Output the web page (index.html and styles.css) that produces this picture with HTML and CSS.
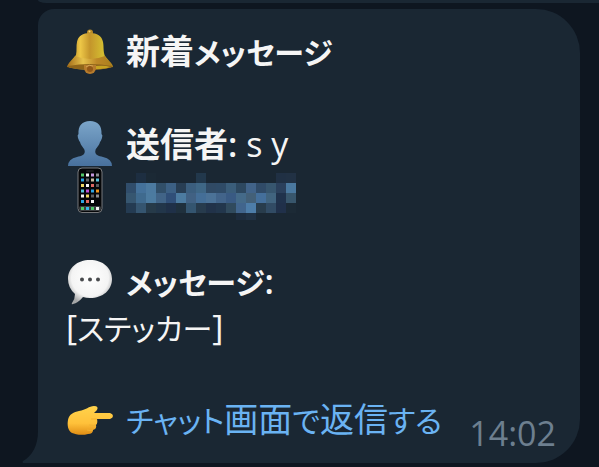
FILE: index.html
```html
<!DOCTYPE html>
<html lang="ja">
<head>
    <meta charset="UTF-8">
    <title>新着メッセージ</title>
    <link rel="stylesheet" href="styles.css">
</head>
<body>
    <div class="chat">
        <div class="bubble-prev"></div>
        <div class="bubble">
            <svg class="tail" viewBox="0 0 16 32"><path d="M16 0C16 15 10 25 1 30Q0 31 1 32H16Z"/></svg>
            <p class="line">
                <svg class="emoji" viewBox="0 0 46 46">
                    <defs>
                        <linearGradient id="gold" x1="0" x2="1">
                            <stop offset="0" stop-color="#a87616"/>
                            <stop offset=".28" stop-color="#edc747"/>
                            <stop offset=".5" stop-color="#c4952b"/>
                            <stop offset=".8" stop-color="#d4bd31"/>
                            <stop offset="1" stop-color="#8d6514"/>
                        </linearGradient>
                        <linearGradient id="rim" x1="0" x2="1">
                            <stop offset="0" stop-color="#a36b18"/>
                            <stop offset=".35" stop-color="#e6c24c"/>
                            <stop offset=".65" stop-color="#bd8727"/>
                            <stop offset="1" stop-color="#a9801c"/>
                        </linearGradient>
                    </defs>
                    <circle cx="23" cy="3.500" r="3" fill="#b98a25"/>
                    <circle cx="22.500" cy="2.500" r="1" fill="#f2d87b"/>
                    <path d="M9 26C10 21 9 17 10 13C11 7 16 4 23 4S35 7 36 13C37 18 36 22 38 27L44 34Q47 39 40 39H6Q-1 39 2 34Z" fill="url(#gold)"/>
                    <path d="M8 27Q23 33 38 27C40 32 46 34 46 38Q23 44 0 38C1 33 7 32 8 27Z" fill="url(#rim)"/>
                    <path d="M1 37Q23 33 45 37Q45 40 23 41Q1 40 1 37Z" fill="#8f651a"/>
                    <path d="M29 37Q38 36 43 38Q38 40 29 40Z" fill="#c6a322"/>
                    <path d="M17 36H29V39A6 6 0 0 1 17 39Z" fill="#b67b2c"/>
                    <circle cx="23" cy="40" r="3" fill="#925818"/>
                    <path d="M19 38Q22 35 26 37" stroke="#d3a453" fill="none"/>
                </svg>
                <b>新着<span class="kana">メッセージ</span></b>
            </p>
            <p class="line blank"></p>
            <p class="line">
                <svg class="emoji" viewBox="0 0 46 46">
                    <defs>
                        <linearGradient id="person" x1="0" y1="0" x2="0" y2="1">
                            <stop offset="0" stop-color="#7ba5c9"/>
                            <stop offset="1" stop-color="#48719e"/>
                        </linearGradient>
                    </defs>
                    <path d="M23 0C31 0 35 5 34.500 13Q36 14 35 17T33 21C32 25 29 27 28.500 29C27 34 32 35 36 36Q45 38 45 45H1Q1 38 10 36C14 35 19 34 17.500 29C17 27 14 25 13 21Q12 20 11 17T11.500 13C11 5 15 0 23 0Z" fill="url(#person)"/>
                </svg>
                <span><b>送信者:</b> s y</span>
            </p>
            <p class="line">
                <svg class="emoji" viewBox="0 0 46 46">
                    <rect x="11" y="1" width="24" height="44.500" rx="4" fill="#050608" stroke="#77797c"/>
                    <rect x="19" y="3" width="8" height="2" rx="1" fill="#191b1d"/>
                    <g class="apps">
                        <path stroke="#51c768" d="M14 8h3"/><path stroke="#f4f4f4" d="M19 8h3"/><path stroke="#c798df" d="M24 8h3"/><path stroke="#8c8d90" d="M29 8h3"/>
                        <path stroke="#2ca5e4" d="M14 13h3"/><path stroke="#626467" d="M19 13h3"/><path stroke="#ccbfa3" d="M24 13h3"/><path stroke="#58c5de" d="M29 13h3"/>
                        <path stroke="#f0d764" d="M14 18.500h3"/><path stroke="#f4f4f4" d="M19 18.500h3"/><path stroke="#dd6762" d="M24 18.500h3"/><path stroke="#58595b" d="M29 18.500h3"/>
                        <path stroke="#56c4da" d="M14 24h3"/><path stroke="#bd52d5" d="M19 24h3"/><path stroke="#2ca5e4" d="M24 24h3"/><path stroke="#ed951d" d="M29 24h3"/>
                        <path stroke="#f4f4f4" d="M14 29h3"/><path stroke="#f0d764" d="M19 29h3"/><path stroke="#5d5f62" d="M24 29h3"/><path stroke="#8c8d90" d="M29 29h3"/>
                        <path stroke="#2ca5e4" d="M14 34.500h3"/><path stroke="#dd6762" d="M19 34.500h3"/><path stroke="#f4f4f4" d="M24 34.500h3"/>
                    </g>
                    <rect x="12" y="39" width="22" height="5" rx="2" fill="#3b3f42"/>
                    <g class="apps">
                        <path stroke="#51c768" d="M14 41.500h3"/><path stroke="#35b8eb" d="M19 41.500h3"/><path stroke="#51c768" d="M24 41.500h3"/><path stroke="#f4f4f4" d="M29 41.500h3"/>
                    </g>
                </svg>
                <svg class="mosaic" viewBox="0 0 170 46" shape-rendering="crispEdges" id="mosaic"></svg>
            </p>
            <p class="line blank"></p>
            <p class="line">
                <svg class="emoji" viewBox="0 0 46 46">
                    <defs>
                        <radialGradient id="balloon" cx=".5" cy=".4" r=".6">
                            <stop offset="0" stop-color="#fff"/>
                            <stop offset=".7" stop-color="#f4f4f4"/>
                            <stop offset="1" stop-color="#a5a6a7"/>
                        </radialGradient>
                    </defs>
                    <path d="M23 1C36 1 45 9 45 20S36 39 23 39Q19 39 16 38Q11 44 6 45Q4 46 5 44Q8 40 8 35Q1 29 1 20C1 9 10 1 23 1Z" fill="url(#balloon)"/>
                    <circle cx="15" cy="20.500" r="2" fill="#484a4d"/>
                    <circle cx="23" cy="20.500" r="2" fill="#484a4d"/>
                    <circle cx="31" cy="20.500" r="2" fill="#484a4d"/>
                </svg>
                <b><span class="kana">メッセージ</span>:</b>
            </p>
            <p class="line"><span>[<span class="kana">ステッカー</span>]</span></p>
            <p class="line blank"></p>
            <div class="footer">
                <p class="line">
                    <svg class="emoji" viewBox="0 0 46 46">
                        <defs>
                            <linearGradient id="hand" x1="0" y1="0" x2="0" y2="1">
                                <stop offset="0" stop-color="#ffd34c"/>
                                <stop offset=".6" stop-color="#ffc13a"/>
                                <stop offset="1" stop-color="#e08d14"/>
                            </linearGradient>
                        </defs>
                        <path d="M1 23C2 17 7 15 12 14C19 13 22 9 27 9Q32 9 30 13L27 16H43Q46 17 46 19T43 22H30Q31 26 29 28Q30 32 26 33Q26 37 21 37C14 39 8 37 5 36C1 34 0 28 1 23Z" fill="url(#hand)"/>
                        <path d="M24 22H30M22 28Q27 29 29 28M20 33Q24 34 26 33" fill="none" stroke="#f2b232"/>
                    </svg>
                    <a href="#"><span class="kana">チャット</span>画面<span class="kana">で</span>返信<span class="kana">する</span></a>
                </p>
                <time class="time">14:02</time>
            </div>
        </div>
    </div>

    <script>
        // "-" is an empty cell
        var rows = [
            "- 1d2e41 1b2935 - - - - 22384c - - - - - - - 203044 213144",
            "304d6b 44719a 4c7aa0 314f69 3c6084 283e54 3b5e7e 3f6786 304a65 2f4b67 3a5d7a 2d4860 416389 304b68 37566f 2b405c 4a789f",
            "365670 3f6a8e 4c7ba0 416487 304f78 4c7ba0 416183 446e97 4b7297 42648a 395a83 446a89 436078 446f9b 41647f 20324c 38566c",
            "243b52 355570 263a49 22364a 1f3048 1f303d 345570 273b4d 213249 22364c 304a5d 41658d 4d7da9 283c4c 314b64 20304a 1c2a36",
            "- - - - - - - - - - - 1d2c3e 203144 - - - -"
        ];
        var out = "";
        for (var y = 0; y < rows.length; y++) {
            var cells = rows[y].split(" ");
            for (var x = 0; x < cells.length; x++) {
                if (cells[x] !== "-") {
                    var h = y === rows.length - 1 ? 7 : 10;
                    out += '<rect x="' + x * 10 + '" y="' + (y * 10 + 6) + '" width="10" height="' + h + '" fill="#' + cells[x] + '"/>';
                }
            }
        }
        document.getElementById("mosaic").innerHTML = out;
    </script>
</body>
</html>
```
FILE: styles.css
```css
body {
    margin: 0;
    background-color: #0e1620;
    color: #f5f5f5;
    font-family: "Open Sans", "Noto Sans CJK JP", sans-serif;
    font-size: 34px;
    line-height: 46px;
    font-feature-settings: "palt";
}
.chat {
    display: flex;
    flex-direction: column;
    gap: 6px;
    padding-left: 38px;
}
.bubble-prev {
    height: 3px;
    background-color: #1a2733;
    border-bottom-left-radius: 16px 6px;
}
.bubble {
    position: relative;
    margin-right: 19px;
    padding: 20px 24px 7px 28px;
    background-color: #1a2733;
    border-radius: 16px 44px 44px 0;
}
/* 吹き出しのしっぽ */
.tail {
    position: absolute;
    right: 100%;
    bottom: 0;
    width: 16px;
    height: 32px;
    fill: #1a2733;
}
.line {
    display: flex;
    align-items: center;
    gap: 12px;
    height: 46px;
    margin: 0;
    white-space: nowrap;
}
.line b {
    font-weight: 600;
}
.kana {
    font-size: 30px;
}
.emoji {
    flex: none;
    width: 48px;
    height: 46px;
}
.apps {
    stroke-width: 3;
}
.mosaic {
    width: 170px;
    height: 46px;
    overflow: visible;
}
.line a {
    color: #6ab3f3;
    text-decoration: none;
}
.footer {
    display: flex;
    justify-content: space-between;
}
.time {
    margin-top: 13px;
    color: #6d7f8f;
}
```
